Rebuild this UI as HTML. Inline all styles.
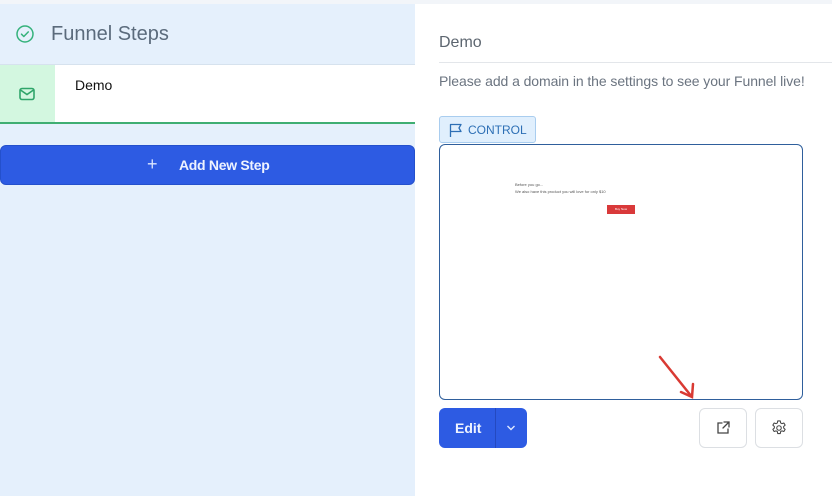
<!DOCTYPE html>
<html><head><style>
*{margin:0;padding:0;box-sizing:border-box}
body{width:832px;height:496px;overflow:hidden;background:#fff;font-family:"Liberation Sans",sans-serif;position:relative}
.a{position:absolute}
</style></head><body>
<div class="a" style="left:0;top:0;width:832px;height:4px;background:#f2f5f9"></div>
<div class="a" style="left:0;top:4px;width:415px;height:492px;background:#e5f0fc"></div>
<svg class="a" style="left:15px;top:24px" width="20" height="20" viewBox="0 0 20 20"><circle cx="10" cy="10" r="8" fill="none" stroke="#34b27b" stroke-width="1.5"/><path d="M6.5 10.2l2.3 2.3 4.5-4.6" fill="none" stroke="#34b27b" stroke-width="1.5" stroke-linecap="round" stroke-linejoin="round"/></svg>
<div class="a" style="left:51px;top:23px;font-size:20px;color:#5b6b7c">Funnel Steps</div>
<div class="a" style="left:0;top:64px;width:415px;height:1px;background:#d6e2ee"></div>
<div class="a" style="left:0;top:65px;width:55px;height:58px;background:#d3f7e0"></div>
<div class="a" style="left:55px;top:65px;width:360px;height:58px;background:#fff"></div>
<div class="a" style="left:0;top:122px;width:415px;height:1.5px;background:#3fae72"></div>
<svg class="a" style="left:19px;top:87px" width="16" height="14" viewBox="0 0 16 14"><rect x="1" y="1.5" width="14" height="11" rx="2" fill="none" stroke="#2fa56a" stroke-width="1.6"/><path d="M1.5 3l6.5 4.5 6.5-4.5" fill="none" stroke="#2fa56a" stroke-width="1.6"/></svg>
<div class="a" style="left:75px;top:77px;font-size:14px;color:#111">Demo</div>
<div class="a" style="left:0;top:145px;width:415px;height:40px;background:#2d5be3;border-radius:6px;border:1px solid #2450cc"></div>
<div class="a" style="left:147px;top:154px;font-size:18px;color:#dce6ff">+</div>
<div class="a" style="left:179px;top:157px;font-size:14px;font-weight:bold;color:#eef3ff;letter-spacing:-0.3px">Add New Step</div>
<div class="a" style="left:439px;top:34px;font-size:16px;color:#5d6670">Demo</div>
<div class="a" style="left:439px;top:62px;width:393px;height:1px;background:#e3e6ea"></div>
<div class="a" style="left:439px;top:73px;font-size:14px;color:#6b7480;letter-spacing:-0.08px">Please add a domain in the settings to see your Funnel live!</div>
<div class="a" style="left:439px;top:116px;width:97px;height:27px;background:#e0effd;border:1px solid #a9cdef;border-radius:3px"></div>
<svg class="a" style="left:448px;top:122px" width="16" height="16" viewBox="0 0 16 16"><path d="M2.5 15V2.5h10.5l-2 3.5 2 3.5H2.5" fill="none" stroke="#2d6fb5" stroke-width="1.3" stroke-linejoin="round"/></svg>
<div class="a" style="left:468px;top:123px;font-size:12px;color:#2d6fb5">CONTROL</div>
<div class="a" style="left:439px;top:144px;width:364px;height:256px;border:1px solid #2f5f9c;border-radius:6px"></div>
<div class="a" style="left:515px;top:182px;font-size:4px;color:#555">Before you go...</div>
<div class="a" style="left:515px;top:189px;font-size:4px;color:#555">We also have this product you will love for only $10</div>
<div class="a" style="left:607px;top:205px;width:28px;height:9px;background:#d9393a;font-size:3px;color:#fff;text-align:center;line-height:9px">Buy Now</div>
<svg class="a" style="left:655px;top:352px" width="45" height="50" viewBox="0 0 45 50"><path d="M5 5L37 45M26 40l11 5 1-13" fill="none" stroke="#d93a33" stroke-width="2.5" stroke-linecap="round"/></svg>
<div class="a" style="left:439px;top:408px;width:88px;height:40px;background:#2d5be3;border-radius:6px"></div>
<div class="a" style="left:495px;top:408px;width:1px;height:40px;background:#2449c0"></div>
<div class="a" style="left:455px;top:420px;font-size:14px;font-weight:bold;color:#eef3ff">Edit</div>
<svg class="a" style="left:505px;top:423px" width="12" height="10" viewBox="0 0 12 10"><path d="M2.5 3l3.5 3.5L9.5 3" fill="none" stroke="#e0e8ff" stroke-width="1.4"/></svg>
<div class="a" style="left:699px;top:408px;width:48px;height:40px;border:1px solid #dcdfe3;border-radius:6px"></div>
<svg class="a" style="left:715px;top:420px" width="16" height="16" viewBox="0 0 16 16"><path d="M7 3H3v10h10V9M9 2h5v5M14 2L8 8" fill="none" stroke="#444" stroke-width="1.3" stroke-linecap="round"/></svg>
<div class="a" style="left:755px;top:408px;width:48px;height:40px;border:1px solid #dcdfe3;border-radius:6px"></div>
<svg class="a" style="left:770px;top:419px" width="18" height="18" viewBox="0 0 24 24"><path d="M10.3 2.6h3.4l.5 2.6 1.8 1 2.5-.9 1.7 2.9-2 1.8v2l2 1.8-1.7 2.9-2.5-.9-1.8 1-.5 2.6h-3.4l-.5-2.6-1.8-1-2.5.9-1.7-2.9 2-1.8v-2l-2-1.8 1.7-2.9 2.5.9 1.8-1z" fill="none" stroke="#444" stroke-width="1.4" stroke-linejoin="round"/><circle cx="12" cy="12" r="3" fill="none" stroke="#444" stroke-width="1.4"/></svg>
</body></html>
